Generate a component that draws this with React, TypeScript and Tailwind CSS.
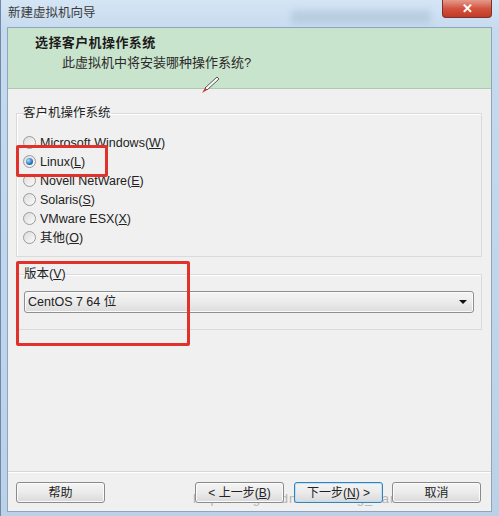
import React from "react";

const FONT = '"Liberation Sans", "Noto Sans CJK SC", sans-serif';

const osOptions = [
  { label: "Microsoft Windows", key: "W" },
  { label: "Linux", key: "L", checked: true },
  { label: "Novell NetWare", key: "E" },
  { label: "Solaris", key: "S" },
  { label: "VMware ESX", key: "X" },
  { label: "其他", key: "O" },
];

function Radio({ checked }: { checked?: boolean }) {
  return (
    <span className="relative flex h-[13px] w-[13px] items-center justify-center rounded-full border border-[#9a9a9a] bg-gradient-to-br from-[#dcdcdc] to-[#fbfbfb]">
      {checked && (
        <span className="h-[7px] w-[7px] rounded-full bg-[radial-gradient(circle_at_35%_35%,#a8dcff,#2a73b8_60%,#164a7e)]" />
      )}
    </span>
  );
}

function WinButton({
  children,
  focused,
}: {
  children: React.ReactNode;
  focused?: boolean;
}) {
  return (
    <button
      className={`relative z-10 flex h-[21px] w-[89px] items-center justify-center rounded-[3px] border bg-gradient-to-b from-[#f4f4f4] via-[#ebebeb] to-[#d9d9d9] text-[12px] text-[#222] ${
        focused
          ? "border-[#3c7fb1] shadow-[inset_0_0_0_1px_#b9e1fb]"
          : "border-[#8a8a8a] shadow-[inset_0_0_0_1px_#fbfbfb]"
      }`}
    >
      {children}
    </button>
  );
}

function PencilCursor() {
  return (
    <svg width="20" height="18" viewBox="0 0 20 18">
      <path d="M17 1 L19 3 L7 14 L5 12 Z" fill="#fafafa" stroke="#555" strokeWidth="1" />
      <path d="M5 12 L7 14 L2 17 Z" fill="#e22b2b" />
    </svg>
  );
}

export default function App() {
  return (
    <div
      className="relative flex h-[516px] w-[499px] flex-col overflow-hidden border-l border-[#6f89a6] bg-gradient-to-b from-[#c6dbf0] via-[#c0d6ec] to-[#bad1e8]"
      style={{ fontFamily: FONT }}
    >
      {/* Title bar */}
      <div className="relative flex h-[27px] items-start justify-between bg-gradient-to-b from-[#d4e5f5] to-[#c8dcef]">
        <div className="pl-[7px] pt-[5px] text-[12.5px] leading-[16px] text-[#3a3a3a]">
          新建虚拟机向导
        </div>
        <div className="absolute left-[290px] top-[10px] h-[14px] w-[140px] rounded-sm bg-[#9fb5cb]/40 blur-[3px]" />
        <div className="mr-[7px] flex h-[18px] w-[50px] items-center justify-center rounded-b-[4px] border border-t-0 border-[#7a3230] bg-gradient-to-b from-[#e49a8c] via-[#d2533f] to-[#c23a23] text-[13px] font-bold leading-none text-white">
          ✕
        </div>
      </div>

      {/* Client area */}
      <div className="mb-[4px] ml-[6px] mr-[7px] flex flex-1 flex-col border border-[#8ea5bd] bg-[#f0f0f0]">
        {/* Header */}
        <div className="h-[61px] border-b border-[#b0c9b3] bg-[#c9e4cd] pl-[27px] pt-[6px]">
          <div className="text-[13px] font-bold leading-[18px] tracking-[0.4px] text-[#1c1c1c]">
            选择客户机操作系统
          </div>
          <div className="mt-[2px] pl-[27px] text-[13px] leading-[18px] text-[#2a2a2a]">
            此虚拟机中将安装哪种操作系统?
          </div>
        </div>

        {/* Body */}
        <div className="flex flex-1 flex-col pl-[8px] pr-[9px]">
          <fieldset className="mt-[16px] border border-[#dadada] px-[6px] pb-[9px] shadow-[inset_1px_1px_0_#fff]">
            <legend className="px-0 text-[12.5px] leading-[16px] text-[#222]">
              客户机操作系统
            </legend>
            <div className="mt-[12px] flex flex-col">
              {osOptions.map((o) => (
                <div key={o.key} className="flex h-[19px] items-center gap-[4px]">
                  <Radio checked={o.checked} />
                  <span className="text-[12.5px] leading-[16px] text-[#222]">
                    {o.label}(<u>{o.key}</u>)
                  </span>
                </div>
              ))}
            </div>
          </fieldset>

          <fieldset className="mt-[9px] border border-[#dadada] px-[7px] pb-[16px] shadow-[inset_1px_1px_0_#fff]">
            <legend className="px-0 text-[12.5px] leading-[16px] text-[#222]">
              版本(<u>V</u>)
            </legend>
            <div className="mt-[9px] flex h-[22px] items-center justify-between rounded-[3px] border border-[#8e8f8f] bg-gradient-to-b from-[#f5f5f5] via-[#ebebeb] to-[#dcdcdc] pl-[3px] pr-[6px] shadow-[inset_0_0_0_1px_#fafafa]">
              <span className="text-[12.5px] leading-[16px] text-[#222]">CentOS 7 64 位</span>
              <span className="h-0 w-0 border-x-[4px] border-t-[4px] border-x-transparent border-t-[#111]" />
            </div>
          </fieldset>
        </div>

        {/* Footer */}
        <div className="relative flex items-center justify-between border-t border-[#d7d7d7] pb-[8px] pl-[8px] pr-[10px] pt-[10px] shadow-[inset_0_1px_0_#fff]">
          <div className="pointer-events-none absolute left-[185px] top-[17px] z-0 text-[13px] tracking-[1px] text-[#b4b4b4]">
            http://blog.csdn.net/Wang_tian
          </div>
          <WinButton>帮助</WinButton>
          <div className="flex gap-[9px]">
            <div className="flex gap-[10px]">
              <WinButton>
                &lt; 上一步(<u>B</u>)
              </WinButton>
              <WinButton focused>
                下一步(<u>N</u>) &gt;
              </WinButton>
            </div>
            <WinButton>取消</WinButton>
          </div>
        </div>
      </div>

      {/* Cursor */}
      <div className="absolute left-[199px] top-[76px]">
        <PencilCursor />
      </div>

      {/* Red annotation boxes */}
      <div className="pointer-events-none absolute left-[15px] top-[145px] h-[32px] w-[92px] rounded-[2px] border-[3px] border-[#e0312b]" />
      <div className="pointer-events-none absolute left-[15px] top-[261px] h-[85px] w-[174px] rounded-[2px] border-[3px] border-[#e0312b]" />
    </div>
  );
}
